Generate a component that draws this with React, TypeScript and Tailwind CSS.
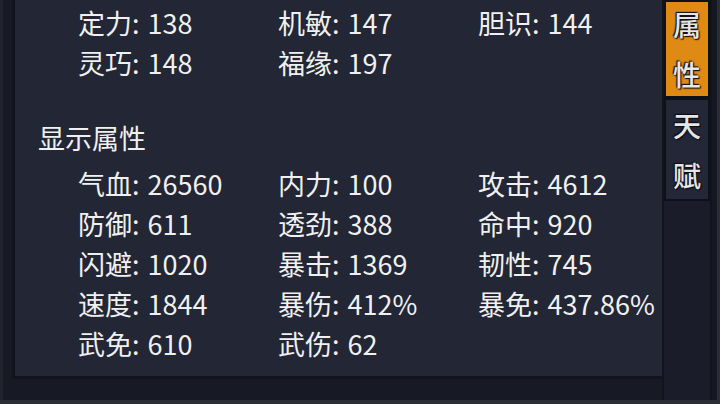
import React from "react";

type Stat = [string, string];

const baseStats: Stat[][] = [
  [["定力", "138"], ["机敏", "147"], ["胆识", "144"]],
  [["灵巧", "148"], ["福缘", "197"]],
];

const shownStats: Stat[][] = [
  [["气血", "26560"], ["内力", "100"], ["攻击", "4612"]],
  [["防御", "611"], ["透劲", "388"], ["命中", "920"]],
  [["闪避", "1020"], ["暴击", "1369"], ["韧性", "745"]],
  [["速度", "1844"], ["暴伤", "412%"], ["暴免", "437.86%"]],
  [["武免", "610"], ["武伤", "62"]],
];

function StatRow({ items }: { items: Stat[] }) {
  return (
    <div className="flex h-10 items-center">
      {items.map(([label, value]) => (
        <div key={label} className="w-[200px] shrink-0 whitespace-nowrap">
          {label}: <span className="pl-0.5">{value}</span>
        </div>
      ))}
    </div>
  );
}

function Tab({ label, active }: { label: string; active?: boolean }) {
  return (
    <div
      className={`flex flex-col items-center justify-center gap-[22px] border-2 border-[#0f111a] text-[28px] leading-none font-medium text-[#e6e6e6] [text-shadow:0_0_2px_#0c0d12,1px_1px_1px_#0c0d12,-1px_-1px_1px_#0c0d12] ${
        active ? "h-[98px] bg-[#df8a14]" : "h-[103px] bg-[#242738]"
      }`}
    >
      {label.split("").map((ch) => (
        <span key={ch}>{ch}</span>
      ))}
    </div>
  );
}

export default function App() {
  return (
    <div
      className="flex h-[404px] w-[720px] flex-col overflow-hidden bg-[#2a2d38] text-[#f0f0f0]"
      style={{ fontFamily: '"Noto Sans CJK SC", "Noto Sans", sans-serif' }}
    >
      <div className="flex h-[400px] bg-[#171a25]">
        {/* left frame */}
        <div className="w-[3px] shrink-0 bg-[#21242f]" />
        <div className="w-[9px] shrink-0" />

        {/* main attribute panel */}
        <div className="flex h-[379px] w-[650px] shrink-0 flex-col border-b-[3px] border-l-[3px] border-[#12141c] bg-[#232634] pt-[2px] text-[27px] leading-none">
          <div className="pl-[63px]">
            {baseStats.map((row, i) => (
              <StatRow key={i} items={row} />
            ))}
          </div>

          <div className="mt-[35px] flex h-10 items-center pl-[23px]">显示属性</div>

          <div className="mt-[6px] pl-[63px]">
            {shownStats.map((row, i) => (
              <StatRow key={i} items={row} />
            ))}
          </div>
        </div>

        {/* side tabs */}
        <div className="flex w-[50px] shrink-0 flex-col border-x-2 border-[#12141c] bg-[#1a1d29]">
          <Tab label="属性" active />
          <Tab label="天赋" />
        </div>
        <div className="w-[5px] shrink-0 bg-[#151823]" />
        <div className="flex-1 bg-[#2a2d38]" />
      </div>
    </div>
  );
}
